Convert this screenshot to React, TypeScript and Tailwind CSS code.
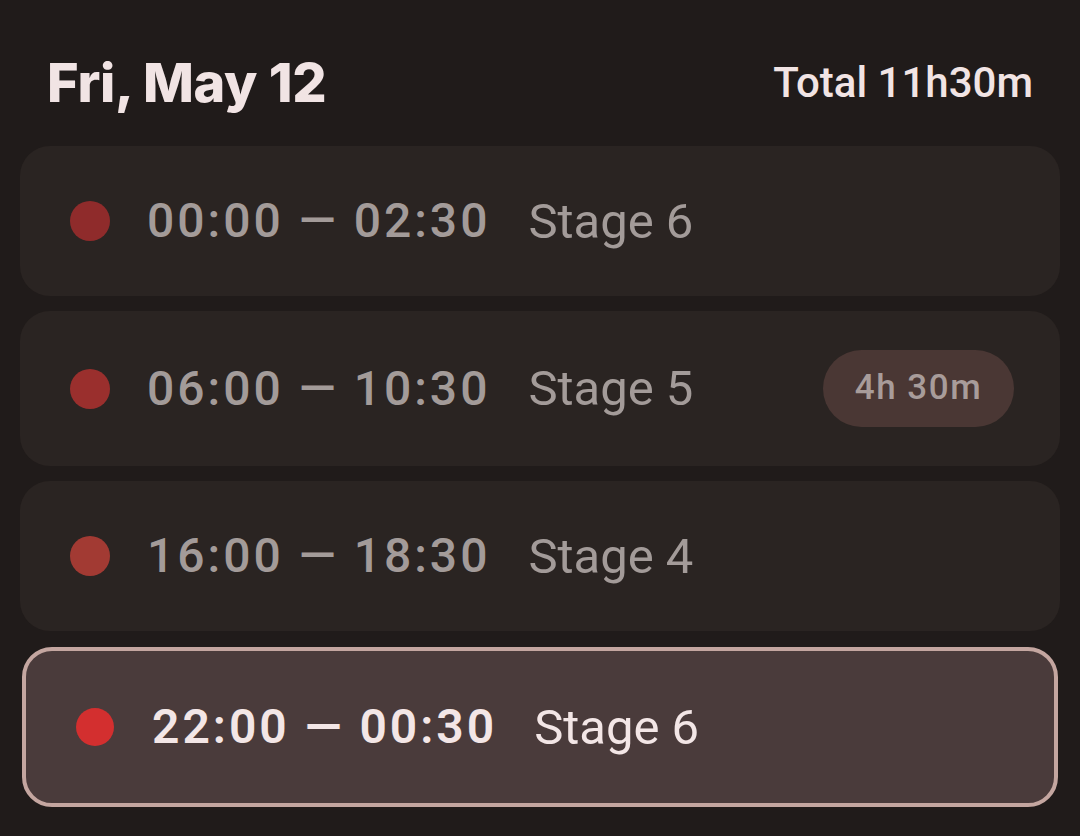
const slots = [
  { time: '00:00 — 02:30', stage: 'Stage 6', dot: 'bg-[#8f2b2b]' },
  { time: '06:00 — 10:30', stage: 'Stage 5', dot: 'bg-[#9a2f2d]', badge: '4h 30m' },
  { time: '16:00 — 18:30', stage: 'Stage 4', dot: 'bg-[#a23a33]' },
]

export default function App() {
  return (
    <div
      className="w-[1080px] h-[836px] bg-[#201b1a] px-[20px] pt-[48px] overflow-hidden"
      style={{ fontFamily: 'Roboto, "Noto Sans", sans-serif' }}
    >
      {/* Header */}
      <div className="flex items-center justify-between px-[27px] h-[68px]">
        <h1
          className="text-[54px] font-extrabold tracking-[-0.3px] text-[#f1e4e4]"
          style={{ fontFamily: 'Inter, sans-serif' }}
        >
          Fri, May 12
        </h1>
        <span className="text-[42px] font-medium text-[#f1e4e4]">Total 11h30m</span>
      </div>

      {/* Slots */}
      <div className="mt-[30px] flex flex-col gap-[15px]">
        {slots.map((s) => (
          <div
            key={s.time}
            className="flex items-center min-h-[150px] py-[39px] pl-[50px] pr-[46px] rounded-[30px] bg-[#2a2422]"
          >
            <span className={`w-10 h-10 rounded-full shrink-0 ${s.dot}`} />
            <span className="ml-[37px] text-[48px] font-medium tracking-[3px] text-[#a39b99] leading-none">
              {s.time}
            </span>
            <span className="ml-[38px] text-[49px] text-[#a39b99] leading-none">{s.stage}</span>
            {s.badge && (
              <span className="ml-auto h-[77px] w-[191px] rounded-full bg-[#4a3734] text-[#a89c9a] text-[35px] font-medium tracking-[1.5px] flex items-center justify-center">
                {s.badge}
              </span>
            )}
          </div>
        ))}

        <div className="mx-[2px] mt-[1px] flex items-center h-[160px] pl-[50px] rounded-[30px] border-4 border-[#c4a6a0] bg-[#4a3b3b]">
          <span className="w-[38px] h-[38px] rounded-full shrink-0 bg-[#d32f2f]" />
          <span className="ml-[38px] text-[48px] font-semibold tracking-[3px] text-[#f3e6e6] leading-none">
            22:00 — 00:30
          </span>
          <span className="ml-[37px] text-[49px] text-[#f3e6e6] leading-none">Stage 6</span>
        </div>
      </div>
    </div>
  )
}
